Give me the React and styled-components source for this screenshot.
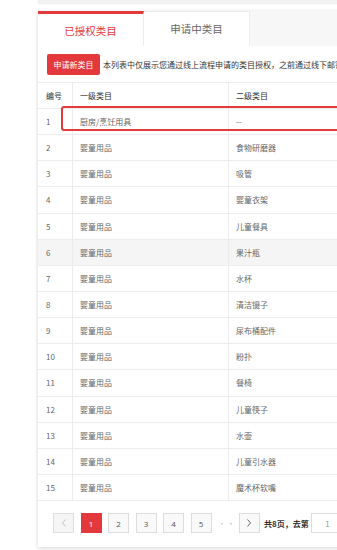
import React from "react";
import styled, { createGlobalStyle } from "styled-components";

const RED = "#e4393c";

const GlobalStyle = createGlobalStyle`
  html, body {
    margin: 0;
    padding: 0;
    background: #fff;
    overflow: hidden;
  }
  body {
    font-family: "Noto Sans CJK SC", "Noto Sans", sans-serif;
  }
`;

const Page = styled.div`
  width: 337px;
  height: 550px;
  overflow: hidden;
`;

const PrevCard = styled.div`
  margin-left: 38px;
  width: 600px;
  height: 3px;
  background: #f2f2f2;
  box-shadow: 0 1px 2px rgba(0, 0, 0, 0.08);
`;

const Card = styled.div`
  margin: 8px 0 0 38px;
  width: 600px;
  background: #fff;
  box-shadow: 0 1px 4px rgba(0, 0, 0, 0.18);
`;

const TabBar = styled.div`
  display: flex;
  height: 35px;
  background: #f7f7f7;
`;

const Tab = styled.div`
  width: 106px;
  box-sizing: border-box;
  display: flex;
  align-items: center;
  justify-content: center;
  background: #fff;
  font-size: 10.5px;
  color: ${({ active }) => (active ? RED : "#666")};
  border-top: ${({ active }) => (active ? `3px solid ${RED}` : "1px solid #ececec")};
  border-right: 1px solid #ececec;
  padding-bottom: ${({ active }) => (active ? "0" : "2px")};
`;

const Toolbar = styled.div`
  display: flex;
  align-items: center;
  padding: 8px 9px 7px;
  overflow: hidden;
`;

const NewButton = styled.div`
  flex-shrink: 0;
  width: 53px;
  height: 21px;
  display: flex;
  align-items: center;
  justify-content: center;
  background: ${RED};
  color: #fff;
  font-size: 8px;
  border-radius: 2px;
`;

const Notice = styled.span`
  margin-left: 3px;
  font-size: 8px;
  color: #333;
  white-space: nowrap;
`;

const Table = styled.div`
  border-top: 1px solid #ececec;
`;

const Row = styled.div`
  position: relative;
  display: grid;
  grid-template-columns: 34px 156px 1fr;
  height: ${({ head }) => (head ? "26px" : "26.15px")};
  box-sizing: border-box;
  border-bottom: 1px solid #ececec;
  background: ${({ shaded }) => (shaded ? "#f5f5f5" : "#fff")};
  color: ${({ head }) => (head ? "#333" : "#666")};
  font-size: 8px;
`;

const Cell = styled.div`
  display: flex;
  align-items: center;
  padding-left: ${({ first }) => (first ? "8px" : "7px")};
  border-left: ${({ first }) => (first ? "none" : "1px solid #ececec")};
  white-space: nowrap;
`;

const Highlight = styled.div`
  position: absolute;
  left: 23px;
  top: -3px;
  width: 600px;
  height: 25px;
  border: 2px solid #e23b3b;
  border-radius: 3px;
  box-sizing: border-box;
  pointer-events: none;
`;

const Pager = styled.div`
  display: flex;
  align-items: center;
  gap: 6.5px;
  padding: 12px 15px 14px;
`;

const PageBtn = styled.div`
  width: 21px;
  height: 20px;
  box-sizing: border-box;
  display: flex;
  align-items: center;
  justify-content: center;
  font-size: 8px;
  font-family: "Open Sans", "Noto Sans", sans-serif;
  border: 1px solid ${({ active }) => (active ? RED : "#ddd")};
  background: ${({ active, muted }) => (active ? RED : muted ? "#f5f5f5" : "#f9f9f9")};
  color: ${({ active, muted }) => (active ? "#fff" : muted ? "#bbb" : "#555")};
`;

const Dots = styled.span`
  width: 14px;
  text-align: center;
  color: #c4c4c4;
  font-size: 8px;
  letter-spacing: 1px;
`;

const Total = styled.span`
  font-size: 8px;
  font-weight: 700;
  color: #333;
  white-space: nowrap;
  margin-left: -2px;
`;

const GotoInput = styled.div`
  width: 40px;
  height: 20px;
  box-sizing: border-box;
  border: 1px solid #ddd;
  display: flex;
  align-items: center;
  padding-left: 13px;
  font-size: 8px;
  color: #999;
  margin-left: -4px;
`;

const rows = [
  ["厨房/烹饪用具", "--"],
  ["婴童用品", "食物研磨器"],
  ["婴童用品", "吸管"],
  ["婴童用品", "婴童衣架"],
  ["婴童用品", "儿童餐具"],
  ["婴童用品", "果汁瓶"],
  ["婴童用品", "水杯"],
  ["婴童用品", "清洁镊子"],
  ["婴童用品", "尿布桶配件"],
  ["婴童用品", "粉扑"],
  ["婴童用品", "餐椅"],
  ["婴童用品", "儿童筷子"],
  ["婴童用品", "水壶"],
  ["婴童用品", "儿童引水器"],
  ["婴童用品", "魔术杯软嘴"],
];

const Chevron = ({ dir }) => (
  <svg width="6" height="8" viewBox="0 0 6 8">
    <path
      d={dir === "left" ? "M4.5 0.5 L1.5 4 L4.5 7.5" : "M1.5 0.5 L4.5 4 L1.5 7.5"}
      fill="none"
      stroke="currentColor"
      strokeWidth="0.9"
    />
  </svg>
);

export default function App() {
  return (
    <Page>
      <GlobalStyle />
      <PrevCard />
      <Card>
        <TabBar>
          <Tab active>已授权类目</Tab>
          <Tab>申请中类目</Tab>
        </TabBar>
        <Toolbar>
          <NewButton>申请新类目</NewButton>
          <Notice>
            本列表中仅展示您通过线上流程申请的类目授权，之前通过线下邮寄申请的类目授权不在此展示
          </Notice>
        </Toolbar>
        <Table>
          <Row head>
            <Cell first>编号</Cell>
            <Cell>一级类目</Cell>
            <Cell>二级类目</Cell>
          </Row>
          {rows.map(([a, b], i) => (
            <Row key={i} shaded={i === 5}>
              <Cell first>{i + 1}</Cell>
              <Cell>{a}</Cell>
              <Cell>{b}</Cell>
              {i === 0 && <Highlight />}
            </Row>
          ))}
        </Table>
        <Pager>
          <PageBtn muted>
            <Chevron dir="left" />
          </PageBtn>
          {[1, 2, 3, 4, 5].map((n) => (
            <PageBtn key={n} active={n === 1}>
              {n}
            </PageBtn>
          ))}
          <Dots>···</Dots>
          <PageBtn>
            <Chevron dir="right" />
          </PageBtn>
          <Total>共8页，去第</Total>
          <GotoInput>1</GotoInput>
        </Pager>
      </Card>
    </Page>
  );
}
